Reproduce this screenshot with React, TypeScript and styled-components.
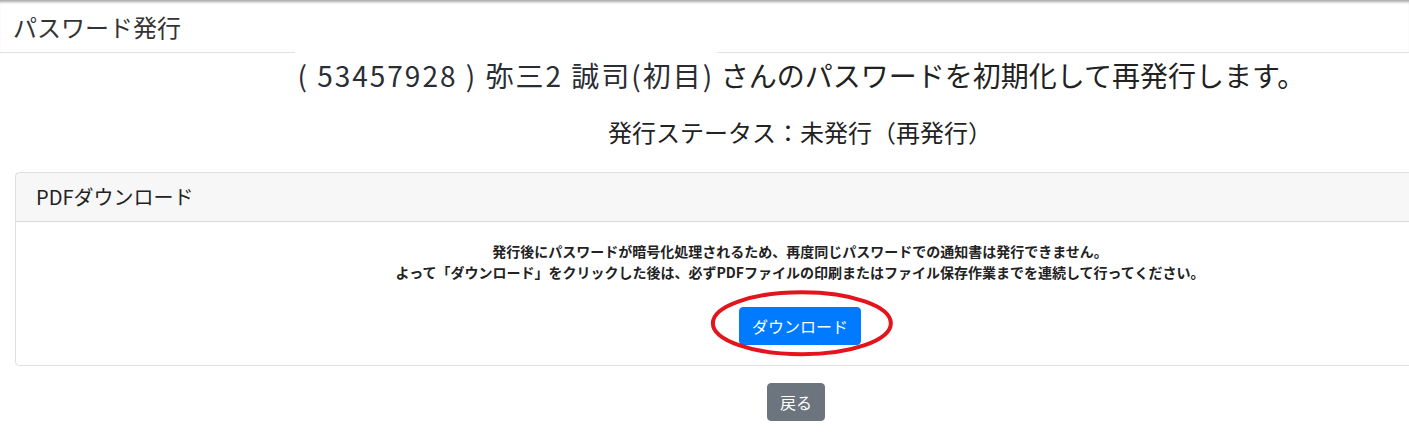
import React from 'react';
import styled, { createGlobalStyle } from 'styled-components';

const GlobalStyle = createGlobalStyle`
  html, body {
    margin: 0;
    padding: 0;
    overflow: hidden;
    background: #fff;
  }
  body {
    font-family: "Noto Sans CJK JP", "Noto Sans", sans-serif;
    color: #212529;
  }
  * {
    box-sizing: border-box;
  }
`;

const TopBar = styled.header`
  height: 53px;
  display: flex;
  align-items: center;
  padding-left: 13px;
  border-bottom: 1px solid #dee2e6;
  box-shadow: inset 0 4px 3px -2px rgba(0, 0, 0, 0.35);
  font-size: 24px;
  color: #333;
`;

const Page = styled.main`
  width: 1600px;
  padding: 0 15px;
`;

const Lead = styled.h3`
  margin: 6px 0 0;
  font-size: 28px;
  line-height: 1.2;
  font-weight: 400;
  text-align: center;
  color: #222;
`;

const Masked = styled.span`
  display: inline-block;
  width: 422px;
  margin-right: 4px;
  background: #fff;
  box-shadow: 0 -8px 0 #fff;
  text-align: center;
  letter-spacing: 2px;
  color: #2a2d34;
`;

const Status = styled.h4`
  margin: 25px 0 0;
  font-size: 24px;
  line-height: 1.2;
  font-weight: 400;
  text-align: center;
  color: #222;
`;

const Card = styled.section`
  margin-top: 26px;
  border: 1px solid rgba(0, 0, 0, 0.125);
  border-radius: 4px;
`;

const CardHeader = styled.div`
  padding: 12px 20px;
  background: rgba(0, 0, 0, 0.03);
  border-bottom: 1px solid rgba(0, 0, 0, 0.125);

  h5 {
    margin: 0;
    font-size: 20px;
    line-height: 1.2;
    font-weight: 400;
    color: #222;
  }
`;

const CardBody = styled.div`
  padding: 19px 20px 20px;
  text-align: center;
`;

const Notice = styled.p`
  margin: 0 0 24px;
  font-size: 14px;
  line-height: 1.5;
  font-weight: 700;
  color: #222;
`;

const Marked = styled.span`
  position: relative;
  display: inline-block;

  svg {
    position: absolute;
    left: 50%;
    top: 50%;
    transform: translate(-49%, -54%);
    pointer-events: none;
  }
`;

const Button = styled.button<{ $variant: 'primary' | 'secondary' }>`
  display: inline-block;
  padding: 6px 12px;
  font-family: inherit;
  font-size: 16px;
  line-height: 1.5;
  color: #fff;
  border-radius: 4px;
  border: 1px solid ${p => (p.$variant === 'primary' ? '#007bff' : '#6c757d')};
  background: ${p => (p.$variant === 'primary' ? '#007bff' : '#6c757d')};
  cursor: pointer;
`;

const Footer = styled.div`
  margin-top: 17px;
  padding-right: 8px;
  text-align: center;
`;

export default function App() {
  return (
    <>
      <GlobalStyle />
      <TopBar>パスワード発行</TopBar>
      <Page>
        <Lead>
          <Masked>( 53457928 ) 弥三2 誠司(初目)</Masked>
          さんのパスワードを初期化して再発行します。
        </Lead>
        <Status>発行ステータス：未発行（再発行）</Status>

        <Card>
          <CardHeader>
            <h5>PDFダウンロード</h5>
          </CardHeader>
          <CardBody>
            <Notice>
              発行後にパスワードが暗号化処理されるため、再度同じパスワードでの通知書は発行できません。
              <br />
              よって「ダウンロード」をクリックした後は、必ずPDFファイルの印刷またはファイル保存作業までを連続して行ってください。
            </Notice>
            <Marked>
              <Button $variant="primary">ダウンロード</Button>
              <svg width="186" height="70" viewBox="0 0 186 70">
                <ellipse cx="93" cy="35" rx="89" ry="31" fill="none" stroke="#e3141b" strokeWidth="4" />
              </svg>
            </Marked>
          </CardBody>
        </Card>

        <Footer>
          <Button $variant="secondary">戻る</Button>
        </Footer>
      </Page>
    </>
  );
}
